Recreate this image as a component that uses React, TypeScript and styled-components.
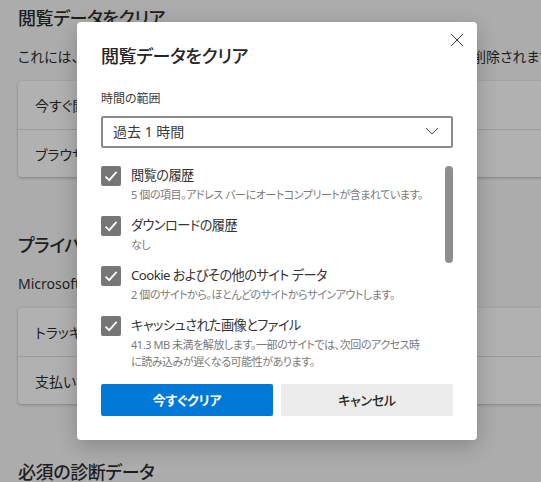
import React from 'react';
import styled, { createGlobalStyle } from 'styled-components';

const Global = createGlobalStyle`
  html, body { margin: 0; padding: 0; background: #acacac; }
  body {
    font-family: "Noto Sans", "Noto Sans CJK JP", sans-serif;
    font-feature-settings: "palt";
    overflow: hidden;
  }
  * { box-sizing: border-box; }
`;

const Viewport = styled.div`
  position: relative;
  width: 541px;
  height: 482px;
  overflow: hidden;
  background: #acacac;
`;

const Page = styled.main`
  display: flex;
  flex-direction: column;
  padding: 4px 0 0 18px;
  width: 700px;
  color: #1e1e1e;
`;

const SectionTitle = styled.h2`
  margin: 0;
  height: 28px;
  line-height: 28px;
  font-size: 18px;
  font-weight: 500;
  letter-spacing: -0.4px;
  white-space: nowrap;
`;

const SectionText = styled.p`
  margin: 14px 0 0;
  height: 22px;
  line-height: 22px;
  font-size: 14px;
  white-space: nowrap;
`;

const Section = styled.section`
  display: flex;
  flex-direction: column;
  margin-bottom: 54px;
`;

const Card = styled.div`
  margin-top: 13px;
  width: 640px;
  border-radius: 4px;
  background: #b1b1b1;
  box-shadow: 0 1px 3px rgba(0, 0, 0, 0.25);
`;

const CardRow = styled.div`
  height: 48px;
  padding-left: 17px;
  display: flex;
  align-items: center;
  font-size: 14px;
  & + & { border-top: 1px solid #9c9c9c; }
`;

const Dialog = styled.div`
  position: absolute;
  left: 77px;
  top: 22px;
  width: 400px;
  height: 418px;
  background: #fff;
  border-radius: 4px;
  box-shadow: 0 6px 22px rgba(0, 0, 0, 0.22);
  padding: 20px 24px 24px;
  display: flex;
  flex-direction: column;
  color: #262626;
`;

const CloseButton = styled.button`
  position: absolute;
  top: 6px;
  right: 8px;
  width: 24px;
  height: 24px;
  padding: 0;
  border: 0;
  background: none;
  display: flex;
  align-items: center;
  justify-content: center;
`;

const DialogTitle = styled.h1`
  margin: 0;
  height: 28px;
  line-height: 28px;
  font-size: 18px;
  font-weight: 500;
  letter-spacing: -0.4px;
`;

const FieldLabel = styled.label`
  margin-top: 19px;
  height: 20px;
  line-height: 20px;
  font-size: 12px;
  color: #3a3a3a;
`;

const Select = styled.div`
  margin-top: 7px;
  height: 32px;
  border: 2px solid #8a8a8a;
  border-radius: 2px;
  padding: 0 12px 2px 10px;
  display: flex;
  align-items: center;
  justify-content: space-between;
  font-size: 14px;
  color: #3a3a3a;
`;

const ListArea = styled.div`
  position: relative;
  margin-top: 18px;
  height: 204px;
  overflow: hidden;
`;

const Thumb = styled.div`
  position: absolute;
  right: 0;
  top: 0;
  width: 8px;
  height: 97px;
  border-radius: 4px;
  background: #8e8e8e;
`;

const Item = styled.div<{ $height: number }>`
  display: flex;
  gap: 10px;
  height: ${p => p.$height}px;
`;

const Check = styled.span`
  flex: none;
  width: 20px;
  height: 20px;
  border-radius: 2px;
  background: #767676;
  display: flex;
  align-items: center;
  justify-content: center;
`;

const ItemBody = styled.div`
  display: flex;
  flex-direction: column;
  width: 296px;
`;

const ItemTitle = styled.div`
  height: 21px;
  line-height: 19px;
  font-size: 13.2px;
  letter-spacing: -0.55px;
  color: #333;
  white-space: nowrap;
`;

const ItemSub = styled.div`
  line-height: 16.5px;
  font-size: 11px;
  letter-spacing: -0.45px;
  color: #7a7a7a;
`;

const Actions = styled.div`
  margin-top: 14px;
  display: grid;
  grid-template-columns: 1fr 1fr;
  gap: 8px;
`;

const ActionButton = styled.button<{ $primary?: boolean }>`
  height: 32px;
  border: 0;
  border-radius: 2px;
  padding: 0 0 2px;
  font-family: inherit;
  font-feature-settings: inherit;
  font-size: 13px;
  letter-spacing: -0.25px;
  font-weight: ${p => (p.$primary ? 700 : 500)};
  background: ${p => (p.$primary ? '#0078d7' : '#ebebeb')};
  color: ${p => (p.$primary ? '#fff' : '#262626')};
`;

const CheckMark = () => (
  <svg width="14" height="14" viewBox="0 0 14 14" fill="none">
    <path d="M1.5 7.6 L5.2 11.2 L12.6 2.9" stroke="#fff" strokeWidth="1.8" />
  </svg>
);

const items = [
  { h: 50, title: '閲覧の履歴', sub: '5 個の項目。アドレス バーにオートコンプリートが含まれています。' },
  { h: 50, title: 'ダウンロードの履歴', sub: 'なし' },
  { h: 50, title: 'Cookie およびその他のサイト データ', sub: '2 個のサイトから。ほとんどのサイトからサインアウトします。' },
  { h: 70, title: 'キャッシュされた画像とファイル', sub: '41.3 MB 未満を解放します。一部のサイトでは、次回のアクセス時に読み込みが遅くなる可能性があります。' },
];

export default function App() {
  return (
    <Viewport>
      <Global />
      <Page>
        <Section>
          <SectionTitle>閲覧データをクリア</SectionTitle>
          <SectionText>これには、履歴、パスワード、Cookie などが含まれます。このプロファイルのみ削除されます。</SectionText>
          <Card>
            <CardRow>今すぐ閲覧データをクリア</CardRow>
            <CardRow>ブラウザーを閉じるたびにクリアするデータを選択する</CardRow>
          </Card>
        </Section>
        <Section>
          <SectionTitle>プライバシー</SectionTitle>
          <SectionText>Microsoft Edge のプライバシー設定を選択します。</SectionText>
          <Card>
            <CardRow>トラッキング拒否要求を送信する</CardRow>
            <CardRow>支払い方法を保存しているかどうかをサイトで確認できるようにする</CardRow>
          </Card>
        </Section>
        <SectionTitle>必須の診断データ</SectionTitle>
      </Page>
      <Dialog>
        <CloseButton aria-label="閉じる">
          <svg width="14" height="14" viewBox="0 0 14 14" fill="none">
            <path d="M1 1 L13 13 M13 1 L1 13" stroke="#3a3a3a" strokeWidth="1" />
          </svg>
        </CloseButton>
        <DialogTitle>閲覧データをクリア</DialogTitle>
        <FieldLabel>時間の範囲</FieldLabel>
        <Select>
          過去 1 時間
          <svg width="14" height="8" viewBox="0 0 14 8" fill="none">
            <path d="M1 1 L7 7 L13 1" stroke="#4a4a4a" strokeWidth="1" />
          </svg>
        </Select>
        <ListArea>
          <Thumb />
          {items.map(item => (
            <Item key={item.title} $height={item.h}>
              <Check><CheckMark /></Check>
              <ItemBody>
                <ItemTitle>{item.title}</ItemTitle>
                <ItemSub>{item.sub}</ItemSub>
              </ItemBody>
            </Item>
          ))}
        </ListArea>
        <Actions>
          <ActionButton $primary>今すぐクリア</ActionButton>
          <ActionButton>キャンセル</ActionButton>
        </Actions>
      </Dialog>
    </Viewport>
  );
}
